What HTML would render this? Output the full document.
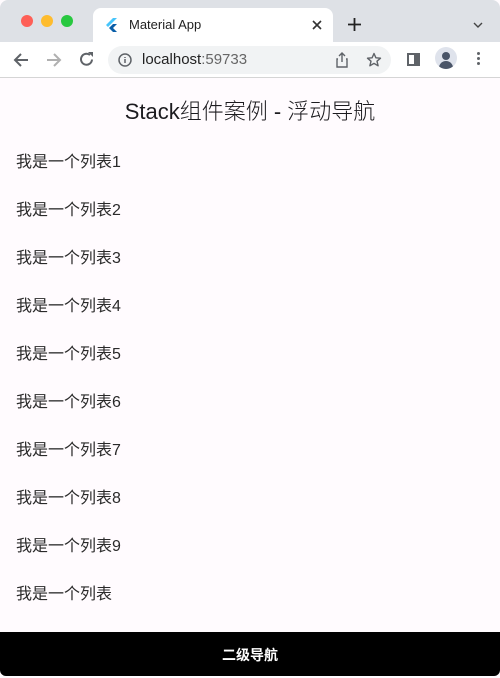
<!DOCTYPE html>
<html><head><meta charset="utf-8"><style>
*{margin:0;padding:0;box-sizing:border-box}
body{width:500px;height:676px;overflow:hidden;background:#fffbfe;font-family:"Liberation Sans","Noto Sans CJK SC",sans-serif;position:relative}
.tabs{position:absolute;left:0;top:0;width:500px;height:42px;background:#dee1e6;border-radius:8px 8px 0 0}
.dot{position:absolute;top:15px;width:12px;height:12px;border-radius:50%}
.tab{position:absolute;left:93px;top:8px;width:240px;height:34px;background:#fff;border-radius:8px 8px 0 0}
.bar{position:absolute;left:0;top:42px;width:500px;height:36px;background:#fff;border-bottom:1px solid #d5d5d5}
.addr{position:absolute;left:108px;top:4px;width:283px;height:28px;background:#f1f3f4;border-radius:14px}
.t{position:absolute;font-size:14px;color:#222}
.title{position:absolute;top:94px;width:500px;text-align:center;font-size:22px;color:#1c1b1f;font-weight:300}
.item{position:absolute;left:16px;font-size:16px;color:#2a2a2a}
.nav{position:absolute;left:0;top:632px;width:500px;height:44px;background:#000;color:#fff;text-align:center;line-height:46px;font-size:14px;font-weight:bold;border-radius:0 0 6px 6px}
</style></head><body>
<div class="tabs">
<div class="dot" style="left:21px;background:#fe5f57"></div>
<div class="dot" style="left:41px;background:#febc2e"></div>
<div class="dot" style="left:61px;background:#28c840"></div>
<div class="tab">
<svg style="position:absolute;left:13px;top:10px" width="12" height="14" viewBox="0 0 12 14"><path d="M7 0L0 7l2 2 9-9z" fill="#47c5fb"/><path d="M7 6L3 10l4 4h4L7 10l4-4z" fill="#0a5ea8"/></svg>
<div class="t" style="left:36px;top:9px;font-size:13px">Material App</div>
<svg style="position:absolute;left:219px;top:12px" width="10" height="10" viewBox="0 0 10 10"><path d="M1 1l8 8M9 1l-8 8" stroke="#333" stroke-width="1.6"/></svg>
</div>
<svg style="position:absolute;left:348px;top:18px" width="13" height="13" viewBox="0 0 13 13"><path d="M6.5 0v13M0 6.5h13" stroke="#222" stroke-width="1.8"/></svg>
<svg style="position:absolute;left:473px;top:22px" width="10" height="6" viewBox="0 0 10 6"><path d="M1 1l4 4 4-4" stroke="#444" stroke-width="1.4" fill="none"/></svg>
</div>
<div class="bar">
<svg style="position:absolute;left:13px;top:10px" width="16" height="16" viewBox="0 0 16 16"><path d="M15 8H2M8 2L2 8l6 6" stroke="#5f6368" stroke-width="2" fill="none"/></svg>
<svg style="position:absolute;left:46px;top:10px" width="16" height="16" viewBox="0 0 16 16"><path d="M1 8h13M8 2l6 6-6 6" stroke="#b0b0b0" stroke-width="2" fill="none"/></svg>
<svg style="position:absolute;left:78px;top:9px" width="17" height="17" viewBox="0 0 17 17"><path d="M14 8.5A5.5 5.5 0 1 1 12 4" stroke="#5f6368" stroke-width="2" fill="none"/><path d="M10 1h5v5z" fill="#5f6368"/></svg>
<div class="addr">
<svg style="position:absolute;left:10px;top:7px" width="14" height="14" viewBox="0 0 14 14"><circle cx="7" cy="7" r="6" stroke="#5f6368" stroke-width="1.5" fill="none"/><path d="M7 6v4M7 4v1" stroke="#5f6368" stroke-width="1.5"/></svg>
<div class="t" style="left:34px;top:5px;font-size:15px">localhost<span style="color:#666">:59733</span></div>
<svg style="position:absolute;left:228px;top:6px" width="12" height="16" viewBox="0 0 12 16"><path d="M6 1v9M3 4l3-3 3 3M2 7H1v8h10V7h-1" stroke="#5f6368" stroke-width="1.4" fill="none"/></svg>
<svg style="position:absolute;left:258px;top:6px" width="16" height="16" viewBox="0 0 16 16"><path d="M8 1.5l1.9 4.3 4.6.4-3.5 3 1.1 4.6L8 11.4 3.9 13.8 5 9.2l-3.5-3 4.6-.4z" stroke="#5f6368" stroke-width="1.4" fill="none" stroke-linejoin="round"/></svg>
</div>
<div style="position:absolute;left:407px;top:11px;width:13px;height:13px;border:2px solid #5f6368;border-right-width:6px"></div>
<div style="position:absolute;left:435px;top:5px;width:22px;height:22px;border-radius:50%;background:#dfe3ec;overflow:hidden"><div style="position:absolute;left:7px;top:5px;width:8px;height:8px;border-radius:50%;background:#4a5568"></div><div style="position:absolute;left:4px;top:14px;width:14px;height:10px;border-radius:7px 7px 0 0;background:#4a5568"></div></div>
<div style="position:absolute;left:477px;top:10px;width:3px;height:3px;background:#5f6368;border-radius:50%;box-shadow:0 5px #5f6368,0 10px #5f6368"></div>
</div>
<div class="title">Stack组件案例 - 浮动导航</div>
<div class="item" style="top:148px">我是一个列表1</div>
<div class="item" style="top:196px">我是一个列表2</div>
<div class="item" style="top:244px">我是一个列表3</div>
<div class="item" style="top:292px">我是一个列表4</div>
<div class="item" style="top:340px">我是一个列表5</div>
<div class="item" style="top:388px">我是一个列表6</div>
<div class="item" style="top:436px">我是一个列表7</div>
<div class="item" style="top:484px">我是一个列表8</div>
<div class="item" style="top:532px">我是一个列表9</div>
<div class="item" style="top:580px">我是一个列表</div>
<div class="nav">二级导航</div>
</body></html>
